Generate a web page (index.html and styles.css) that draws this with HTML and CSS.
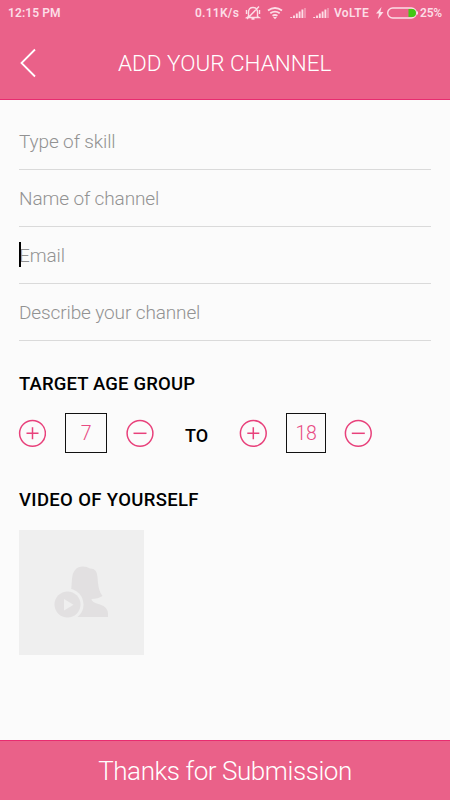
FILE: index.html
```html
<!DOCTYPE html>
<html lang="en">
<head>
<meta charset="utf-8">
<title>Add your channel</title>
<link rel="stylesheet" href="styles.css">
</head>
<body>
<header class="header">
  <div class="status">
    <span class="clock">12:15 PM</span>
    <span class="speed">0.11K/s</span>
    <svg class="bell" width="16" height="16" viewBox="0 0 16 16"><path d="M3.5 11.5V7Q3.500 2.500 8 2.500T12.500 7V11.500L14 12.500H2ZM6.500 14h3M14 1.500L2 14M1.500 5v4M14.500 5v4"/></svg>
    <svg class="wifi" width="16" height="14" viewBox="0 0 16 14"><path d="M1 4.500Q8-.5 15 4.500M3.300 7.300Q8 4 12.700 7.300M5.500 9.800Q8 8.200 10.500 9.800"/><path d="M6 11h4L8 13.300z"/></svg>
    <svg class="signal" width="16" height="12" viewBox="0 0 16 12"><path d="M1.200 11V10M4 11V8.500M6.800 11V6.500M9.600 11V4.500M12.400 11V2.500"/><path class="dim" d="M15 11V1"/></svg>
    <svg class="signal second" width="16" height="12" viewBox="0 0 16 12"><path d="M1.200 11V10M4 11V8.500M6.800 11V6.500M9.600 11V4.500M12.400 11V2.500"/><path class="dim" d="M15 11V1"/></svg>
    <span class="network">VoLTE</span>
    <svg class="bolt" width="8" height="12" viewBox="0 0 8 12"><path d="M5.500 0L0 6.500h3L2 12l5.500-7H4.300z"/></svg>
    <svg class="battery" width="31" height="12" viewBox="0 0 31 12"><rect x=".7" y="1" width="28.600" height="10" rx="5"/><path class="charge" d="M21.500 2h3.500a4 4 0 0 1 0 8h-3.500z"/><path d="M30.300 4.500v3"/></svg>
    <span class="percent">25%</span>
  </div>
  <div class="toolbar">
    <svg class="back" width="18" height="30" viewBox="0 0 18 30"><path d="M16 1.500L2.500 15l13.500 13.500"/></svg>
    <h1>ADD YOUR CHANNEL</h1>
  </div>
</header>
<main>
  <div class="field"><span class="skill">Type of skill</span></div>
  <div class="field"><span class="name">Name of channel</span></div>
  <div class="field focused"><span class="email">Email</span></div>
  <div class="field"><span class="describe">Describe your channel</span></div>
  <h2 class="age-title">TARGET AGE GROUP</h2>
  <div class="ages">
    <svg class="round" width="28" height="28" viewBox="0 0 28 28"><circle cx="14.500" cy="14.300" r="12.900"/><path d="M8.500 14.300h12M14.500 8.300v12"/></svg>
    <span class="number from">7</span>
    <svg class="round" width="28" height="28" viewBox="0 0 28 28"><circle cx="14" cy="14.300" r="12.900"/><path d="M7.500 14.300h13"/></svg>
    <strong class="to">TO</strong>
    <svg class="round" width="28" height="28" viewBox="0 0 28 28"><circle cx="14.300" cy="14.300" r="12.900"/><path d="M8.300 14.300h12M14.300 8.300v12"/></svg>
    <span class="number until">18</span>
    <svg class="round" width="28" height="28" viewBox="0 0 28 28"><circle cx="14.300" cy="14.300" r="12.900"/><path d="M7.800 14.300h13"/></svg>
  </div>
  <h2 class="video-title">VIDEO OF YOURSELF</h2>
  <div class="video">
    <svg width="56" height="54" viewBox="0 0 56 54"><path class="person" d="M17 27L18 14Q19 1.500 29 1.500Q33 1.500 36 3.500Q43 3 43.500 12Q44 26 48.500 31Q44 34 37.500 34Q37 37 46 39.500Q54 42 54 49V52H23Z"/><circle class="ring" cx="13.500" cy="39.500" r="16"/><circle class="disc" cx="13.500" cy="39.500" r="13"/><path class="play" d="M10 34v11.500l9.500-5.750z"/></svg>
  </div>
</main>
<footer class="submit"><span>Thanks for Submission</span></footer>
</body>
</html>
```

FILE: styles.css
```css
* { box-sizing: border-box; }
body {
  margin: 0;
  height: 800px;
  display: flex;
  flex-direction: column;
  overflow: hidden;
  background: #fbfbfb;
  color: #000;
  font-family: Roboto, sans-serif;
}
svg { flex: none; display: block; }
h1, h2 { margin: 0; }
span, strong, h1, h2 { white-space: nowrap; }
.header {
  height: 100px;
  flex: none;
  background: #ea6189;
  border-bottom: 1px solid #e82c70;
}
.status {
  height: 26px;
  display: flex;
  align-items: center;
  padding: 0 0 0 8px;
  color: #fcdde6;
  font-size: 12px;
  font-weight: 600;
}
.status span { flex: none; }
.status svg { fill: none; stroke: #fcdde6; stroke-width: 1.4; }
.clock { width: 187px; letter-spacing: .1px; }
.speed { width: 50px; letter-spacing: .25px; }
.status .wifi { margin-left: 6px; stroke-width: 1.8; }
.status .wifi path:last-child { fill: #fcdde6; stroke: none; }
.status .signal { margin-left: 7px; stroke-width: 1.9; }
.signal .dim { opacity: .4; }
.network { width: 42px; margin-left: 5px; letter-spacing: .3px; }
.status .bolt { fill: #fcdde6; stroke: none; }
.battery { margin-left: 3px; }
.status .battery .charge { fill: #42c714; stroke: none; }
.percent { margin-left: 2px; letter-spacing: -.2px; }
.toolbar { display: flex; align-items: center; height: 73px; padding-left: 19px; }
.back { fill: none; stroke: #fff; stroke-width: 1.8; }
h1 {
  margin: 0 0 0 81px;
  color: #fff;
  font-size: 22.5px;
  font-weight: 300;
}
main { flex: 1; padding: 13px 19px 0; }
.field {
  height: 57px;
  padding-top: 17px;
  border-bottom: 1px solid #dadada;
  color: #929292;
  font-size: 19px;
  font-weight: 300;
  line-height: 24px;
  letter-spacing: -.12px;
  position: relative;
}
.focused::before {
  content: "";
  position: absolute;
  left: 0;
  top: 15px;
  width: 2px;
  height: 25px;
  background: #000;
}
h2 { font-size: 18.5px; font-weight: 550; line-height: 24px; }
.age-title { margin-top: 31px; letter-spacing: .15px; }
.ages { display: flex; align-items: center; height: 40px; margin-top: 17px; }
.round { margin-left: -1px; fill: none; stroke: #e8417b; stroke-width: 1.5; }
.number {
  display: flex;
  align-items: center;
  justify-content: center;
  height: 40px;
  border: 1px solid #111;
  color: #e84c84;
  font-size: 19.5px;
  font-weight: 300;
  letter-spacing: -.3px;
}
.from { width: 42px; margin: 0 20px 0 19px; }
.until { width: 40px; margin: 0 19px; }
.to { width: 55px; margin: 5px 0 0 31px; font-size: 18px; font-weight: 550; }
.video-title { margin-top: 35px; letter-spacing: .35px; }
.video {
  display: flex;
  width: 125px;
  height: 125px;
  margin-top: 18px;
  padding: 35px 0 0 35px;
  background: #efefef;
}
.person, .disc { fill: #e2e0e1; }
.ring, .play { fill: #efefef; }
.submit {
  height: 60px;
  flex: none;
  display: flex;
  align-items: center;
  justify-content: center;
  padding-top: 1px;
  border-top: 1px solid #e82c70;
  background: #ea6189;
  color: #fff;
  font-size: 26px;
  font-weight: 300;
  letter-spacing: -.43px;
}
```
